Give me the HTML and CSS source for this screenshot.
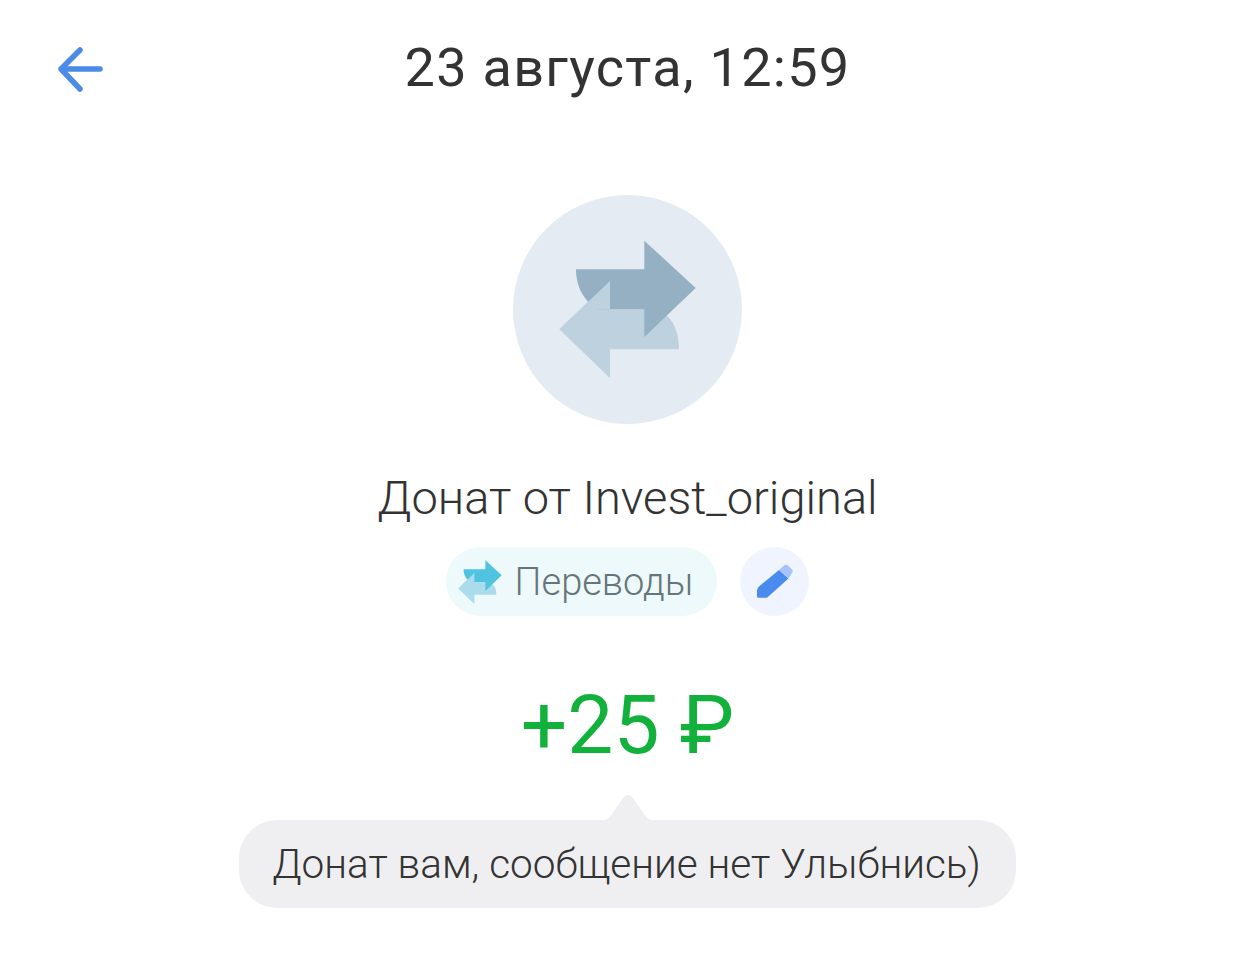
FILE: index.html
```html
<!DOCTYPE html>
<html lang="ru">
  <head>
    <meta charset="UTF-8" />
    <title>Операция</title>
    <link rel="stylesheet" href="styles.css">
  </head>
  <body>
    <header class="top">
      <svg class="back" width="48" height="48" viewBox="0 0 48 48">
        <path d="M43 24H4M23 5L4 24L23 44" fill="none" stroke="#4a8be8" stroke-width="5.500" stroke-linecap="round" stroke-linejoin="round"/>
      </svg>
      <h1 class="top-title">23 августа, 12:59</h1>
    </header>

    <main class="details">
      <div class="avatar">
        <svg width="229" height="229" viewBox="0 0 229 229">
          <path d="M46.300 134.300L97 86V114.300H136C156 114.300 166 132 166 154.300H97V183Z" fill="#bed1de"/>
          <path d="M63 74.300H131.300V45.700L182.700 93L131.300 142V114.300H84L75 106.700C67 98 63 87 63 74.300Z" fill="#95b0c2"/>
          <path d="M46.300 134.300L97 86V114.300H75Z" fill="#bed1de"/>
        </svg>
      </div>

      <p class="name">Донат от Invest_original</p>

      <div class="tags">
        <div class="category">
          <svg width="44" height="44" viewBox="46 45 137 138">
            <path d="M46.300 134.300L97 86V114.300H136C156 114.300 166 132 166 154.300H97V183Z" fill="#aadcec"/>
            <path d="M63 74.300H131.300V45.700L182.700 93L131.300 142V114.300H84L75 106.700C67 98 63 87 63 74.300Z" fill="#4fc3e0"/>
            <path d="M46.300 134.300L97 86V114.300H75Z" fill="#aadcec"/>
          </svg>
          <span class="category-name">Переводы</span>
        </div>
        <button type="button" class="edit-btn">
          <svg width="36" height="36" viewBox="0 0 36 36">
            <path d="M0 33V26.500Q0 24 2.500 22L22 6L31.500 14.500L10 33.700H1Z" fill="#4a8bef"/>
            <path d="M22 6L27 1.500C28 .500 30 .500 31 1.500L35 5.500C36 6.500 36 8 35 9L31.500 14.500Z" fill="#a6c4fa"/>
          </svg>
        </button>
      </div>

      <p class="amount">+25 ₽</p>

      <div class="message">
        <svg class="message-tip" width="54" height="27" viewBox="0 0 54 27">
          <path d="M0 27C6 26 8 24 11 20L22 4C25 0 29 0 32 4L43 20C46 24 48 26 54 27Z" fill="#efeff1"/>
        </svg>
        <span>Донат вам, сообщение нет Улыбнись)</span>
      </div>
    </main>
  </body>
</html>
```

FILE: styles.css
```css
*{
  box-sizing:border-box;
}

body{
  margin:0;
  background:#fff;
  color:#333;
  font-family:"Roboto","Noto Sans",sans-serif;
  font-weight:300;
}

p,h1{
  margin:0;
  font-weight:300;
}

.top{
  display:flex;
  justify-content:center;
  padding:33px 1px 0 0;
  height:195px;
}

.top-title{
  font-size:54px;
  line-height:70px;
  font-weight:400;
  letter-spacing:1.300px;
}

.back{
  position:absolute;
  left:57px;
  top:45px;
}

.details{
  display:flex;
  flex-direction:column;
  align-items:center;
  padding-right:1px;
}

.avatar{
  width:229px;
  height:229px;
  border-radius:50%;
  background:#e5ebf3;
}

.avatar svg{
  display:block;
}

.name{
  margin-top:44px;
  font-size:47px;
  line-height:60px;
}

.tags{
  display:flex;
  gap:23px;
  margin-top:19px;
}

.category{
  display:flex;
  align-items:center;
  gap:13px;
  height:69px;
  padding:0 24px 0 12px;
  border-radius:35px;
  background:#eef9fb;
  color:#65767a;
  font-size:38px;
}

.edit-btn{
  display:flex;
  align-items:center;
  justify-content:center;
  width:69px;
  height:69px;
  padding:0;
  border:0;
  border-radius:50%;
  background:#eff4fe;
}

.amount{
  margin-top:54px;
  color:#12b13b;
  font-size:82px;
  line-height:110px;
  font-weight:400;
}

.message{
  position:relative;
  margin-top:40px;
  padding:0 35px 0 33px;
  height:88px;
  display:flex;
  align-items:center;
  border-radius:38px;
  background:#efeff1;
  font-size:40.500px;
}

.message-tip{
  position:absolute;
  left:50%;
  top:-26px;
  margin-left:-27px;
}
```
